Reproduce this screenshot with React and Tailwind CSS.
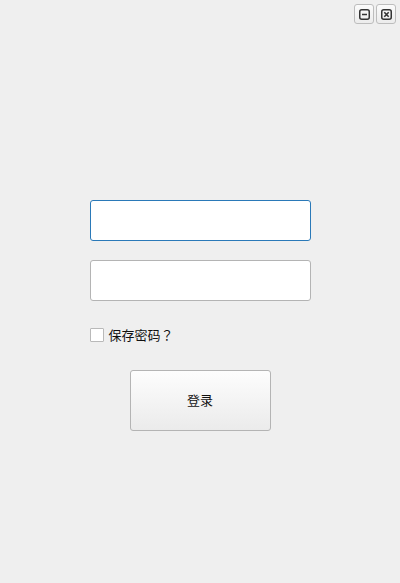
import React from 'react';

function TitleButton({ children }) {
  return (
    <button className="w-[20px] h-[20px] flex items-center justify-center rounded-[3px] border border-[#bdbdbd] bg-gradient-to-b from-[#fbfbfb] to-[#ececec]">
      {children}
    </button>
  );
}

export default function App() {
  return (
    <div
      className="w-[400px] h-[583px] bg-[#efefef] flex flex-col"
      style={{ fontFamily: '"Noto Sans", "Noto Sans CJK SC", sans-serif' }}
    >
      <div className="flex justify-end gap-[2px] pt-[4px] pr-[4px]">
        <TitleButton>
          <svg width="11" height="11" viewBox="0 0 11 11">
            <rect x="0.75" y="0.75" width="9.5" height="9.5" rx="2" fill="none" stroke="#333" strokeWidth="1.5" />
            <line x1="3" y1="5.5" x2="8" y2="5.5" stroke="#333" strokeWidth="1.5" />
          </svg>
        </TitleButton>
        <TitleButton>
          <svg width="11" height="11" viewBox="0 0 11 11">
            <rect x="0.75" y="0.75" width="9.5" height="9.5" rx="2" fill="none" stroke="#333" strokeWidth="1.5" />
            <path d="M3.3 3.3 L7.7 7.7 M7.7 3.3 L3.3 7.7" stroke="#333" strokeWidth="1.6" />
          </svg>
        </TitleButton>
      </div>

      <div className="mx-auto w-[221px] mt-[176px] flex flex-col">
        <input className="h-[41px] w-full bg-white rounded-[3px] border border-[#2a79b8] outline-none" />
        <input className="mt-[19px] h-[41px] w-full bg-white rounded-[3px] border border-[#b4b4b4] outline-none" />
        <label className="mt-[27px] flex items-center gap-[5px] text-[13px] text-[#111] leading-none">
          <span className="w-[14px] h-[14px] bg-white border border-[#b9b9b9] rounded-[1px]" />
          <span>
            保存密码<span style={{ fontFamily: '"Noto Sans CJK TC", sans-serif' }}>？</span>
          </span>
        </label>
        <button className="mt-[28px] mx-auto w-[141px] h-[61px] rounded-[3px] border border-[#b4b4b4] bg-gradient-to-b from-[#fdfdfd] to-[#ebebeb] text-[13px] text-[#111]">
          登录
        </button>
      </div>
    </div>
  );
}
